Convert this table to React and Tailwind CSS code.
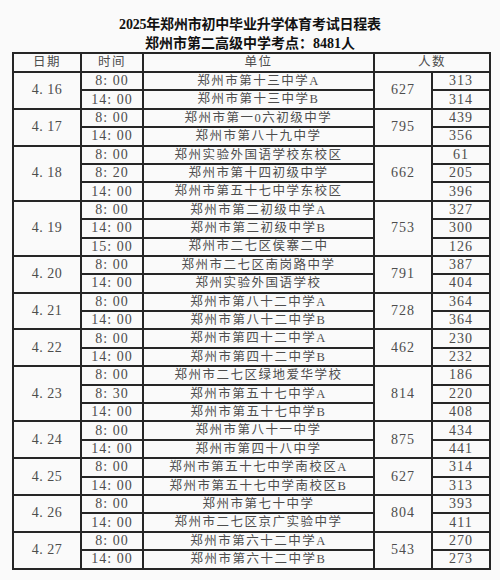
import React from 'react'

const days = [
  { date: '4. 16', total: 627, rows: [['8: 00', '郑州市第十三中学A', 313], ['14: 00', '郑州市第十三中学B', 314]] },
  { date: '4. 17', total: 795, rows: [['8: 00', '郑州市第一0六初级中学', 439], ['14: 00', '郑州市第八十九中学', 356]] },
  { date: '4. 18', total: 662, rows: [['8: 00', '郑州实验外国语学校东校区', 61], ['8: 20', '郑州市第十四初级中学', 205], ['14: 00', '郑州市第五十七中学东校区', 396]] },
  { date: '4. 19', total: 753, rows: [['8: 00', '郑州市第二初级中学A', 327], ['14: 00', '郑州市第二初级中学B', 300], ['15: 00', '郑州市二七区侯寨二中', 126]] },
  { date: '4. 20', total: 791, rows: [['8: 00', '郑州市二七区南岗路中学', 387], ['14: 00', '郑州实验外国语学校', 404]] },
  { date: '4. 21', total: 728, rows: [['8: 00', '郑州市第八十二中学A', 364], ['14: 00', '郑州市第八十二中学B', 364]] },
  { date: '4. 22', total: 462, rows: [['8: 00', '郑州市第四十二中学A', 230], ['14: 00', '郑州市第四十二中学B', 232]] },
  { date: '4. 23', total: 814, rows: [['8: 00', '郑州市二七区绿地爱华学校', 186], ['8: 30', '郑州市第五十七中学A', 220], ['14: 00', '郑州市第五十七中学B', 408]] },
  { date: '4. 24', total: 875, rows: [['8: 00', '郑州市第八十一中学', 434], ['14: 00', '郑州市第四十八中学', 441]] },
  { date: '4. 25', total: 627, rows: [['8: 00', '郑州市第五十七中学南校区A', 314], ['14: 00', '郑州市第五十七中学南校区B', 313]] },
  { date: '4. 26', total: 804, rows: [['8: 00', '郑州市第七十中学', 393], ['14: 00', '郑州市二七区京广实验中学', 411]] },
  { date: '4. 27', total: 543, rows: [['8: 00', '郑州市第六十二中学A', 270], ['14: 00', '郑州市第六十二中学B', 273]] },
]

const cell = 'border-2 border-[#262626] p-0 text-center align-middle leading-none'

export default function App() {
  return (
    <div
      className="w-[500px] h-[580px] bg-[#fafafa] pt-[15px] overflow-hidden"
      style={{ fontFamily: '"Liberation Serif", "Noto Sans CJK SC", serif' }}
    >
      <div className="text-center font-bold text-[#111] text-[14px] leading-[19px]">
        <div className="tracking-[-0.2px]">2025年郑州市初中毕业升学体育考试日程表</div>
        <div>郑州市第二高级中学考点：8481人</div>
      </div>

      <table className="mt-[-1px] ml-[12px] w-[477px] table-fixed border-collapse border-[2.5px] border-[#111] text-[12.5px] tracking-[1.5px] text-[#4d4d4d]">
        <colgroup>
          <col className="w-[68px]" />
          <col className="w-[62px]" />
          <col className="w-[231px]" />
          <col className="w-[58px]" />
          <col className="w-[58px]" />
        </colgroup>
        <thead>
          <tr className="h-[19px]">
            <th className={`${cell} font-normal`}>日期</th>
            <th className={`${cell} font-normal`}>时间</th>
            <th className={`${cell} font-normal`}>单位</th>
            <th className={`${cell} font-normal`} colSpan={2}>人数</th>
          </tr>
        </thead>
        <tbody>
          {days.map((day) =>
            day.rows.map((r, i) => (
              <tr key={day.date + i} className="h-[18.4px]">
                {i === 0 && (
                  <td className={`${cell} text-[14px] tracking-[0.5px]`} rowSpan={day.rows.length}>
                    {day.date}
                  </td>
                )}
                <td className={`${cell} text-[14px] tracking-[1px]`}>{r[0]}</td>
                <td className={cell}>{r[1]}</td>
                {i === 0 && (
                  <td className={`${cell} text-[14px] tracking-[1px]`} rowSpan={day.rows.length}>
                    {day.total}
                  </td>
                )}
                <td className={`${cell} text-[14px] tracking-[1px]`}>{r[2]}</td>
              </tr>
            ))
          )}
        </tbody>
      </table>
    </div>
  )
}
